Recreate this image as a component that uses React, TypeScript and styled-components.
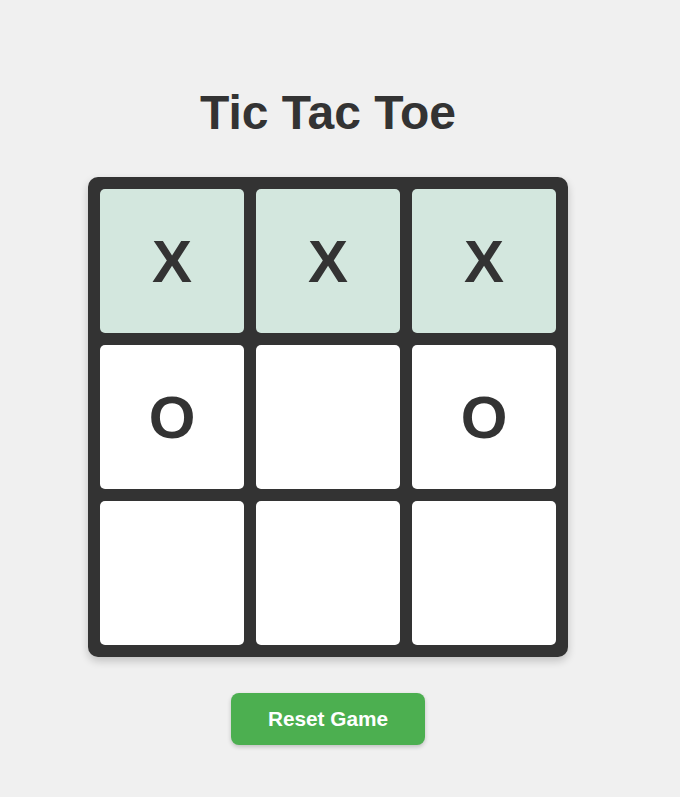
import React, { useState } from "react";
import styled, { createGlobalStyle } from "styled-components";

const GlobalStyle = createGlobalStyle`
  html, body {
    margin: 0;
    padding: 0;
    background: #f0f0f0;
    font-family: "Liberation Sans", Arial, sans-serif;
    color: #333;
  }
`;

const Page = styled.div`
  display: flex;
  flex-direction: column;
  align-items: center;
  padding: 85px 24px 40px 0;
`;

const Title = styled.h1`
  margin: 0 0 37px;
  font-size: 48px;
  font-weight: bold;
  line-height: normal;
  color: #333;
`;

const Board = styled.div`
  display: grid;
  grid-template-columns: repeat(3, 144px);
  grid-template-rows: repeat(3, 144px);
  gap: 12px;
  padding: 12px;
  background: #333;
  border-radius: 10px;
  box-shadow: 0 4px 8px rgba(0, 0, 0, 0.2);
`;

const Cell = styled.button<{ $win: boolean }>`
  display: flex;
  align-items: center;
  justify-content: center;
  border: none;
  padding: 0;
  margin: 0;
  border-radius: 5px;
  background: ${(p) => (p.$win ? "#d3e7de" : "#ffffff")};
  font-family: "Liberation Sans", Arial, sans-serif;
  font-size: 60px;
  font-weight: bold;
  color: #333;
  cursor: pointer;
`;

const ResetButton = styled.button`
  margin-top: 36px;
  width: 194px;
  height: 52px;
  border: none;
  border-radius: 8px;
  background: #4caf50;
  color: #fff;
  font-family: "Liberation Sans", Arial, sans-serif;
  font-size: 20.8px;
  font-weight: bold;
  box-shadow: 0 2px 4px rgba(0, 0, 0, 0.2);
  cursor: pointer;
`;

const initial = ["X", "X", "X", "O", "", "O", "", "", ""];
const winLine = [0, 1, 2];

export default function App() {
  const [cells, setCells] = useState<string[]>(initial);
  const [win, setWin] = useState<number[]>(winLine);

  return (
    <>
      <GlobalStyle />
      <Page>
        <Title>Tic Tac Toe</Title>
        <Board>
          {cells.map((v, i) => (
            <Cell key={i} $win={win.includes(i)}>
              {v}
            </Cell>
          ))}
        </Board>
        <ResetButton
          onClick={() => {
            setCells(Array(9).fill(""));
            setWin([]);
          }}
        >
          Reset Game
        </ResetButton>
      </Page>
    </>
  );
}
